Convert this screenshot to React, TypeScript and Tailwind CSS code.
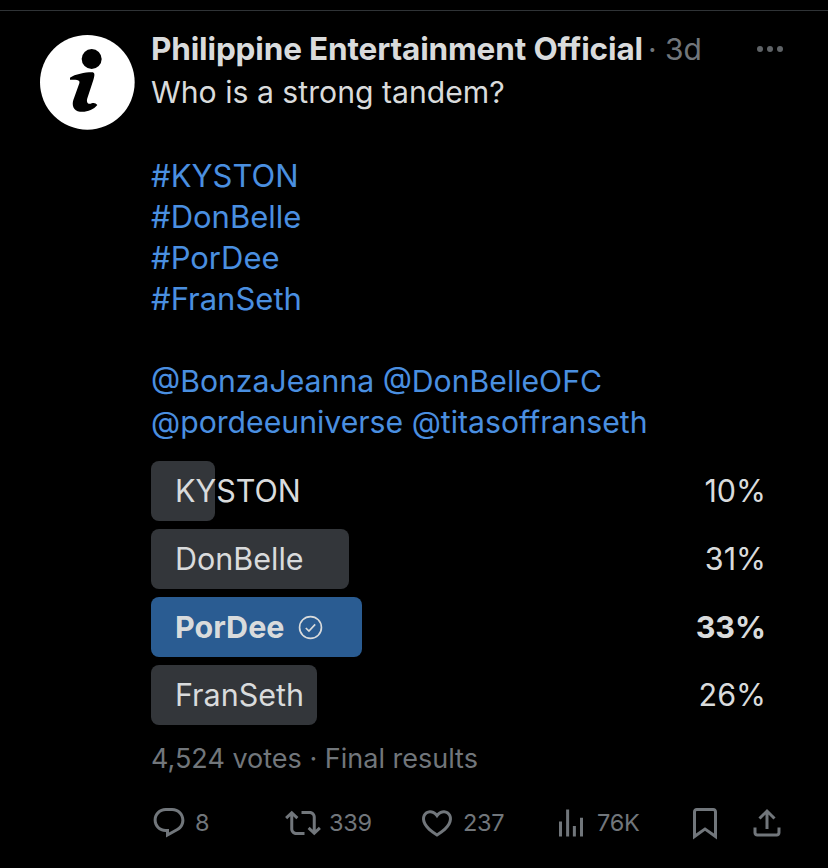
const FONT = "font-['Inter','Liberation_Sans',sans-serif]";

const options = [
  { label: 'KYSTON', pct: '10%', width: 'w-[64px]' },
  { label: 'DonBelle', pct: '31%', width: 'w-[198px]' },
  { label: 'PorDee', pct: '33%', width: 'w-[211px]', winner: true },
  { label: 'FranSeth', pct: '26%', width: 'w-[166px]' },
];

function Glyph({ d }: { d: string }) {
  return (
    <svg viewBox="0 0 24 24" className="h-9 w-9 shrink-0 fill-[#71767b]">
      <path d={d} />
    </svg>
  );
}

const ICONS = {
  reply: 'M1.751 10c0-4.42 3.584-8 8.005-8h4.366c4.49 0 8.129 3.64 8.129 8.13 0 2.96-1.607 5.68-4.196 7.11l-8.054 4.46v-3.69h-.067c-4.49.1-8.183-3.51-8.183-8.01zm8.005-6c-3.317 0-6.005 2.69-6.005 6 0 3.37 2.77 6.08 6.138 6.01l.351-.01h1.761v2.3l5.087-2.81c1.951-1.08 3.163-3.13 3.163-5.36 0-3.39-2.744-6.13-6.129-6.13H9.756z',
  retweet: 'M4.5 3.88l4.432 4.14-1.364 1.46L5.5 7.55V16c0 1.1.896 2 2 2H13v2H7.5c-2.209 0-4-1.79-4-4V7.55L1.432 9.48.068 8.02 4.5 3.88zM16.5 6H11V4h5.5c2.209 0 4 1.79 4 4v8.45l2.068-1.93 1.364 1.46-4.432 4.14-4.432-4.14 1.364-1.46 2.068 1.93V8c0-1.1-.896-2-2-2z',
  heart: 'M16.697 5.5c-1.222-.06-2.679.51-3.89 2.16l-.805 1.09-.806-1.09C9.984 6.01 8.526 5.44 7.304 5.5c-1.243.07-2.349.78-2.91 1.91-.552 1.12-.633 2.78.479 4.82 1.074 1.97 3.257 4.27 7.129 6.61 3.87-2.34 6.052-4.64 7.126-6.61 1.111-2.04 1.03-3.7.477-4.82-.561-1.13-1.666-1.84-2.908-1.91zm4.187 7.69c-1.351 2.48-4.001 5.12-8.379 7.67l-.503.3-.504-.3c-4.379-2.55-7.029-5.19-8.382-7.67-1.36-2.5-1.41-4.86-.514-6.67.887-1.79 2.647-2.91 4.601-3.01 1.651-.09 3.368.56 4.798 2.01 1.429-1.45 3.146-2.1 4.796-2.01 1.954.1 3.714 1.22 4.601 3.01.896 1.81.846 4.17-.514 6.67z',
  views: 'M8.75 21V3h2v18h-2zM18 21V8.5h2V21h-2zM4 21l.004-10h2L6 21H4zm9.248 0v-7h2v7h-2z',
  bookmark: 'M4 4.5C4 3.12 5.119 2 6.5 2h11C18.881 2 20 3.12 20 4.5v18.44l-8-5.71-8 5.71V4.5zM6.5 4c-.276 0-.5.22-.5.5v14.56l6-4.29 6 4.29V4.5c0-.28-.224-.5-.5-.5h-11z',
  share: 'M12 2.59l5.7 5.7-1.41 1.42L13 6.41V16h-2V6.41l-3.3 3.3-1.41-1.42L12 2.59zM21 15l-.02 3.51c0 1.38-1.12 2.49-2.5 2.49H5.5C4.11 21 3 19.88 3 18.5V15h2v3.5c0 .28.22.5.5.5h12.98c.28 0 .5-.22.5-.5L19 15h2z',
};

function Action({ icon, count }: { icon: string; count: string }) {
  return (
    <div className="flex w-[134px] items-center gap-2">
      <Glyph d={icon} />
      <span className="text-[23.5px] leading-9 tracking-[-0.3px] text-[#71767b]">{count}</span>
    </div>
  );
}

function Avatar() {
  return (
    <svg viewBox="0 0 285 285" className="h-[95px] w-[95px] shrink-0">
      <circle cx="142" cy="142" r="142" fill="#fff" />
      <circle cx="155" cy="72" r="30" fill="#000" />
      <path
        d="M90 128C105 118 135 112 155 112C165 112 165 120 160 135L142 190C138 203 145 210 155 205C162 202 168 205 172 210C160 225 140 232 120 230C100 228 95 210 100 195L118 145C122 132 105 135 90 134Z"
        fill="#000"
      />
    </svg>
  );
}

export default function App() {
  return (
    <div className={`h-[868px] w-[828px] overflow-hidden bg-black ${FONT}`}>
      <div className="mt-[10px] h-px bg-[#2f3336]" />
      <div className="flex gap-4 pl-10 pr-[43px] pt-[24px]">
        <Avatar />
        <div className="min-w-0 flex-1">
          <div className="flex h-7 items-center text-[#71767b]">
            <span className="text-[31.5px] font-bold leading-7 tracking-[-0.15px] text-[#d9dbdc]">
              Philippine Entertainment Official
            </span>
            <span className="ml-[5px] text-[30px] leading-7">· 3d</span>
            <span className="mr-[2px] ml-auto flex gap-1">
              <span className="h-[6px] w-[6px] rounded-full bg-[#5f6367]" />
              <span className="h-[6px] w-[6px] rounded-full bg-[#5f6367]" />
              <span className="h-[6px] w-[6px] rounded-full bg-[#5f6367]" />
            </span>
          </div>

          <div className="mt-[9px] leading-[41px] text-[#d9dbdc]">
            <p className="text-[30.2px]">Who is a strong tandem?</p>
            <div className="mt-[42px] text-[31px] text-[#4a8fe0]">
              <p>#KYSTON</p>
              <p>#DonBelle</p>
              <p>#PorDee</p>
              <p>#FranSeth</p>
            </div>
            <div className="mt-[42px] text-[30.2px] text-[#4a8fe0]">
              <p>@BonzaJeanna @DonBelleOFC</p>
              <p>@pordeeuniverse @titasoffranseth</p>
            </div>
          </div>

          <div className="mt-[18px] flex flex-col gap-2">
            {options.map((o) => (
              <div key={o.label} className="relative mr-[19px] flex h-[60px] items-center justify-between text-[30.5px]">
                <div className={`absolute inset-y-0 left-0 rounded-lg ${o.width} ${o.winner ? 'bg-[#2a5c92]' : 'bg-[#33363a]'}`} />
                <span className={`relative flex items-center gap-[14px] pl-6 text-[#d9dbdc] ${o.winner ? 'font-bold' : ''}`}>
                  {o.label}
                  {o.winner && (
                    <svg viewBox="0 0 24 24" fill="none" stroke="currentColor" strokeWidth="1.6" className="h-[25px] w-[25px]">
                      <circle cx="12" cy="12" r="10.5" />
                      <path d="M7.5 12.5l3 3 6-6.5" />
                    </svg>
                  )}
                </span>
                <span className={`relative text-[#d9dbdc] ${o.winner ? 'font-bold' : ''}`}>{o.pct}</span>
              </div>
            ))}
          </div>

          <p className="mt-[14px] text-[27px] leading-[40px] text-[#71767b]">4,524 votes · Final results</p>

          <div className="mt-[26px] flex items-center">
            <Action icon={ICONS.reply} count="8" />
            <Action icon={ICONS.retweet} count="339" />
            <Action icon={ICONS.heart} count="237" />
            <Action icon={ICONS.views} count="76K" />
            <div className="w-[62px]">
              <Glyph d={ICONS.bookmark} />
            </div>
            <Glyph d={ICONS.share} />
          </div>
        </div>
      </div>
    </div>
  );
}
